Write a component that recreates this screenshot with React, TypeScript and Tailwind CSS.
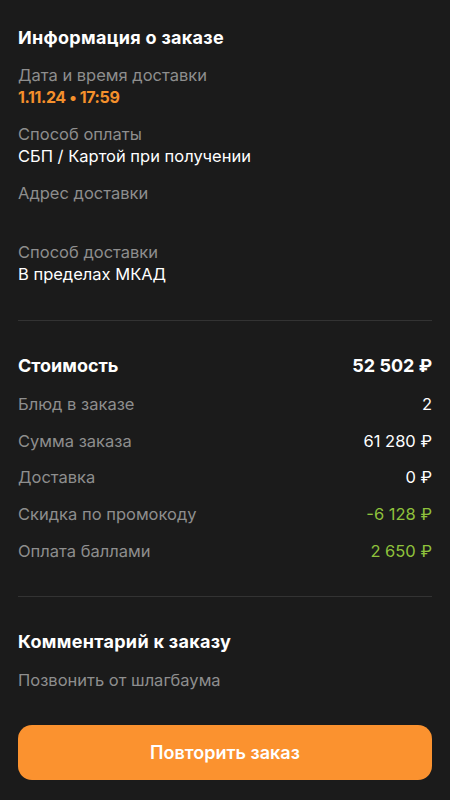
import React from 'react'

const font = { fontFamily: 'Inter, "Noto Sans", sans-serif' }

const info = [
  { label: 'Дата и время доставки', value: '1.11.24 • 17:59', accent: true },
  { label: 'Способ оплаты', value: 'СБП / Картой при получении' },
  { label: 'Адрес доставки', value: '' },
  { label: 'Способ доставки', value: 'В пределах МКАД' },
]

const rows = [
  { label: 'Блюд в заказе', value: '2' },
  { label: 'Сумма заказа', value: '61 280 ₽' },
  { label: 'Доставка', value: '0 ₽' },
  { label: 'Скидка по промокоду', value: '-6 128 ₽', green: true },
  { label: 'Оплата баллами', value: '2 650 ₽', green: true },
]

export default function App() {
  return (
    <div style={font} className="min-h-[800px] w-[450px] bg-[#1b1b1b] px-[18px] pt-[26px] pb-[20px] text-white">
      <h2 className="text-[18px] font-bold leading-[24px] tracking-[0.3px]">Информация о заказе</h2>

      <div className="mt-[14px] flex flex-col gap-[15px]">
        {info.map((item) => (
          <div key={item.label} className="text-[16.5px] leading-[22px]">
            <div className="text-[#8e8e8e]">{item.label}</div>
            <div
              className={
                item.accent
                  ? 'h-[22px] text-[16px] font-bold tracking-[-0.4px] text-[#f4902c]'
                  : 'h-[22px] text-white'
              }
            >
              {item.value}
            </div>
          </div>
        ))}
      </div>

      <div className="mt-[35px] h-px bg-[#333333]" />

      <div className="mt-[33px] flex items-center justify-between text-[18px] font-bold leading-[24px]">
        <span>Стоимость</span>
        <span>52 502 ₽</span>
      </div>

      <div className="mt-[15px] flex flex-col gap-[14.7px]">
        {rows.map((r) => (
          <div key={r.label} className="flex justify-between text-[16.5px] leading-[22px]">
            <span className="text-[#8e8e8e]">{r.label}</span>
            <span className={r.green ? 'text-[#8fc23c]' : 'text-white'}>{r.value}</span>
          </div>
        ))}
      </div>

      <div className="mt-[34px] h-px bg-[#333333]" />

      <h2 className="mt-[33px] text-[18px] font-bold leading-[24px] tracking-[0.3px]">Комментарий к заказу</h2>
      <p className="mt-[15px] text-[16.5px] leading-[22px] text-[#8e8e8e]">Позвонить от шлагбаума</p>

      <button className="mt-[34px] flex h-[55px] w-full items-center justify-center rounded-[14px] bg-[#fb922f] text-[18px] font-semibold text-white">
        Повторить заказ
      </button>
    </div>
  )
}
